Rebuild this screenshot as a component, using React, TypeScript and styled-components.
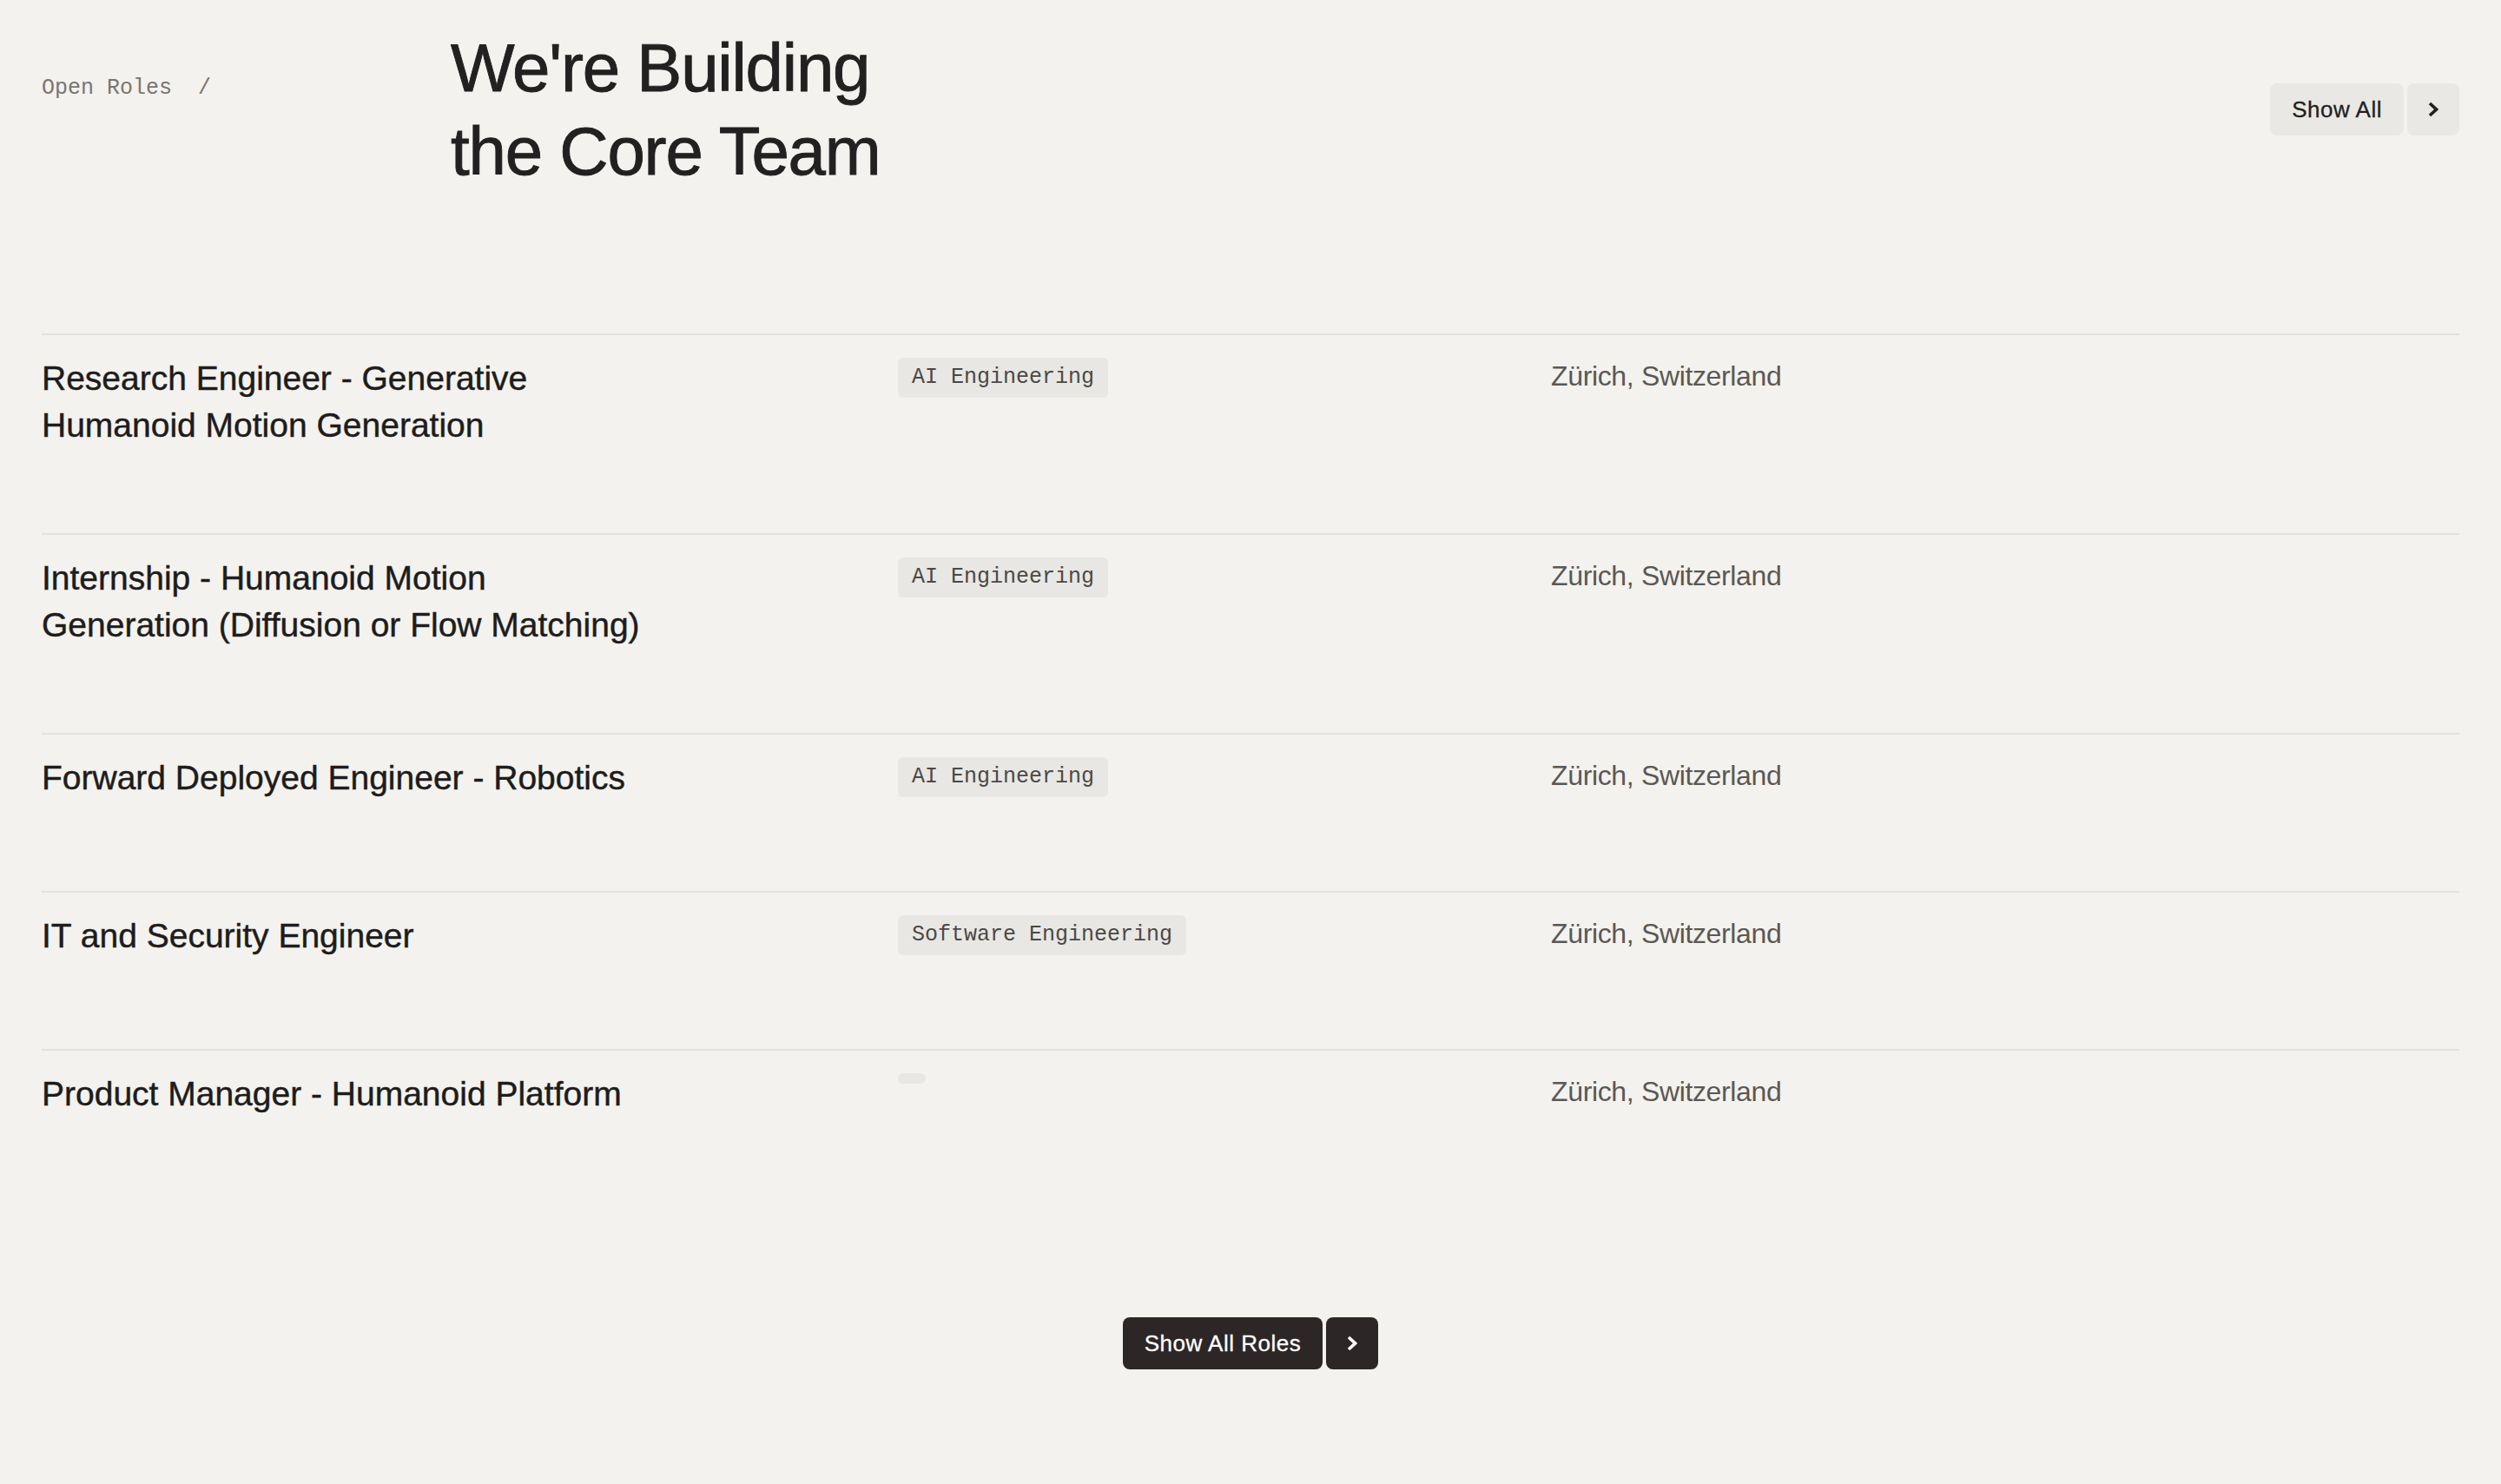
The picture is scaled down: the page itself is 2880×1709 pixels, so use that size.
import React from "react";
import styled, { createGlobalStyle } from "styled-components";

const GlobalStyle = createGlobalStyle`
  *, *::before, *::after { box-sizing: border-box; }
  html, body { margin: 0; padding: 0; background: #f3f2ee; }
  body {
    font-family: "Liberation Sans", Arial, Helvetica, sans-serif;
    color: #1f1d1d;
    -webkit-font-smoothing: antialiased;
  }
`;

const Page = styled.main`
  min-height: 1709px;
  padding: 30px 48px 132px;
  display: flex;
  flex-direction: column;
`;

const Header = styled.header`
  display: grid;
  grid-template-columns: 471px 1fr auto;
  align-items: center;
`;

const Crumb = styled.div`
  align-self: start;
  margin-top: 57px;
  font-family: "Liberation Mono", "Courier New", monospace;
  font-size: 25px;
  line-height: 30px;
  color: #7a7571;
  display: flex;
  gap: 30px;
`;

const Heading = styled.h1`
  margin: 0;
  font-size: 78px;
  line-height: 96px;
  font-weight: 400;
  letter-spacing: -1.2px;
  color: #222020;
  -webkit-text-stroke: 0.9px #222020;
`;

const ButtonGroup = styled.div<{ $center?: boolean }>`
  display: flex;
  gap: 4px;
  justify-content: ${(p) => (p.$center ? "center" : "flex-end")};
`;

const Button = styled.button<{ $dark?: boolean; $square?: boolean }>`
  height: 60px;
  min-width: 60px;
  padding: ${(p) => (p.$square ? "0" : "0 25px")};
  display: flex;
  align-items: center;
  justify-content: center;
  border: none;
  border-radius: 8px;
  background: ${(p) => (p.$dark ? "#2d2626" : "#e9e8e4")};
  color: ${(p) => (p.$dark ? "#ffffff" : "#231f1f")};
  font-family: "Liberation Sans", Arial, Helvetica, sans-serif;
  font-size: 26px;
  letter-spacing: 0.5px;
  -webkit-text-stroke: 0.3px currentColor;
  cursor: pointer;
`;

const List = styled.section`
  margin-top: 162px;
  display: flex;
  flex-direction: column;
`;

const Row = styled.article`
  display: grid;
  grid-template-columns: 986px 752px 1fr;
  align-items: start;
  min-height: 182px;
  padding: 26px 0 97px;
  border-top: 2px solid #e4e2de;
`;

const Title = styled.h2`
  margin: -3px 0 0;
  max-width: 702px;
  font-size: 39px;
  line-height: 54px;
  font-weight: 400;
  color: #1e1c1c;
  -webkit-text-stroke: 0.45px #1e1c1c;
`;

const Tag = styled.span`
  justify-self: start;
  min-width: 32px;
  min-height: 12px;
  padding: 6px 16px;
  border-radius: 6px;
  background: #e8e7e3;
  font-family: "Liberation Mono", "Courier New", monospace;
  font-size: 25px;
  line-height: 34px;
  color: #4b4946;
`;

const Location = styled.div`
  font-size: 32px;
  line-height: 42px;
  letter-spacing: -0.35px;
  color: #5b5854;
`;

const Footer = styled.div`
  margin-top: 127px;
`;

const Chevron = () => (
  <svg width="12" height="18" viewBox="0 0 12 18" fill="none" aria-hidden>
    <polyline
      points="2,2 9.5,9 2,16"
      stroke="currentColor"
      strokeWidth="3.6"
      strokeLinecap="butt"
      strokeLinejoin="miter"
    />
  </svg>
);

type Role = { title: string; team: string; location: string };

const roles: Role[] = [
  {
    title: "Research Engineer - Generative Humanoid Motion Generation",
    team: "AI Engineering",
    location: "Zürich, Switzerland",
  },
  {
    title: "Internship - Humanoid Motion Generation (Diffusion or Flow Matching)",
    team: "AI Engineering",
    location: "Zürich, Switzerland",
  },
  {
    title: "Forward Deployed Engineer - Robotics",
    team: "AI Engineering",
    location: "Zürich, Switzerland",
  },
  {
    title: "IT and Security Engineer",
    team: "Software Engineering",
    location: "Zürich, Switzerland",
  },
  {
    title: "Product Manager - Humanoid Platform",
    team: "",
    location: "Zürich, Switzerland",
  },
];

export default function App() {
  return (
    <>
      <GlobalStyle />
      <Page>
        <Header>
          <Crumb>
            <span>Open Roles</span>
            <span>/</span>
          </Crumb>
          <Heading>
            We're Building
            <br />
            the Core Team
          </Heading>
          <ButtonGroup>
            <Button>Show All</Button>
            <Button $square aria-label="Show all">
              <Chevron />
            </Button>
          </ButtonGroup>
        </Header>

        <List>
          {roles.map((r) => (
            <Row key={r.title}>
              <Title>{r.title}</Title>
              <Tag>{r.team}</Tag>
              <Location>{r.location}</Location>
            </Row>
          ))}
        </List>

        <Footer>
          <ButtonGroup $center>
            <Button $dark>Show All Roles</Button>
            <Button $dark $square aria-label="Show all roles">
              <Chevron />
            </Button>
          </ButtonGroup>
        </Footer>
      </Page>
    </>
  );
}
